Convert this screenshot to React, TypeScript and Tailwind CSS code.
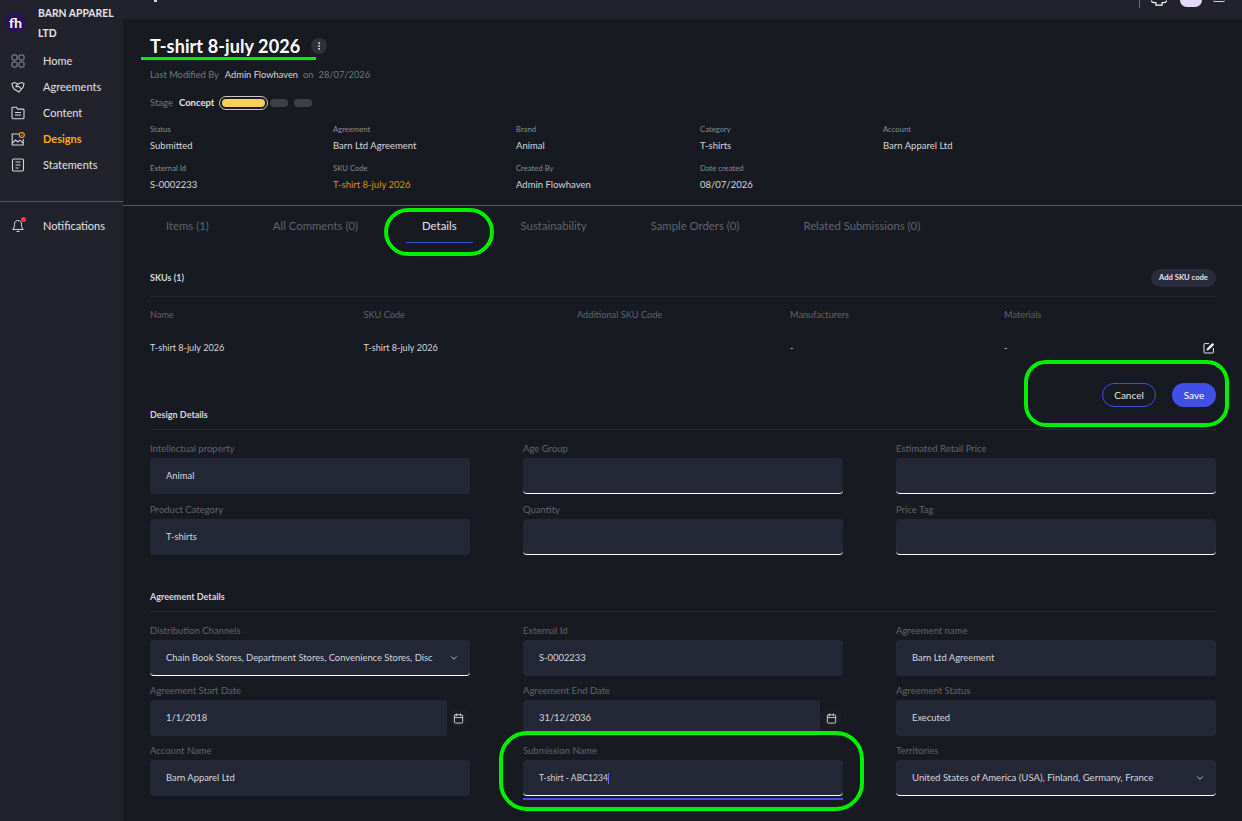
import { Calendar, ChevronDown, EllipsisVertical } from "lucide-react";

const font = { fontFamily: '"Lato", "Noto Sans", sans-serif' };

function HomeIcon() {
  return (
    <svg width="14" height="14" viewBox="0 0 14 14" fill="none" stroke="#9a9ba3" strokeWidth="1">
      <rect x="1" y="1" width="5" height="5" rx="1.2" />
      <rect x="8" y="1" width="5" height="5" rx="1.2" />
      <rect x="1" y="8" width="5" height="5" rx="1.2" />
      <rect x="8" y="8" width="5" height="5" rx="1.2" />
    </svg>
  );
}

function HandshakeIcon() {
  return (
    <svg width="14" height="14" viewBox="0 0 14 14" fill="none" stroke="#d8d8dc" strokeWidth="1.1">
      <path d="M1 3.5l2.5-1L7 4l3.5-1.5L13 3.5l-.8 3.5L8 12 3 9 1.6 6.5z" />
      <path d="M7 4L4.8 6.2c.8.9 1.8.7 2.6 0L10.5 9" />
    </svg>
  );
}

function FolderIcon() {
  return (
    <svg width="14" height="14" viewBox="0 0 14 14" fill="none" stroke="#d8d8dc" strokeWidth="1.1">
      <path d="M1 2.2c0-.5.4-.9.9-.9h3.4l1.4 1.8h5.4c.5 0 .9.4.9.9v7.8c0 .5-.4.9-.9.9H1.9c-.5 0-.9-.4-.9-.9z" />
      <path d="M4 6.5h6M4 9h6" />
    </svg>
  );
}

function DesignsIcon() {
  return (
    <svg width="14" height="14" viewBox="0 0 14 14" fill="none" strokeWidth="1.1">
      <path d="M8 2H1.2v11h11V7" stroke="#d8d8dc" />
      <path d="M1.5 11l3-3 2.4 2 2-1.8 3 2.6" stroke="#d8d8dc" />
      <circle cx="10.8" cy="3" r="2.5" stroke="#ffb020" />
      <path d="M9.8 3l.8.8 1.2-1.4" stroke="#ffb020" strokeWidth="0.8" />
    </svg>
  );
}

function StatementsIcon() {
  return (
    <svg width="14" height="14" viewBox="0 0 14 14" fill="none" stroke="#d8d8dc" strokeWidth="1.1">
      <rect x="1.5" y="1" width="11" height="12" rx="1.2" />
      <path d="M4.5 4h5M4.5 7h5M4.5 10h3" />
    </svg>
  );
}

function BellIcon() {
  return (
    <span className="relative flex h-[14px] w-[14px]">
      <svg width="14" height="14" viewBox="0 0 14 14" fill="none" stroke="#d8d8dc" strokeWidth="1">
        <path d="M7 1.5c-2.4 0-3.6 1.8-3.6 3.8v2.6L1.8 10.5h10.4l-1.6-2.6V5.3c0-2-1.2-3.8-3.6-3.8z" />
        <path d="M5.5 12.5h3" />
      </svg>
      <span className="absolute right-[-1px] top-[-2px] h-[5px] w-[5px] rounded-full bg-[#f0385c]" />
    </span>
  );
}

function EditIcon() {
  return (
    <svg width="12" height="12" viewBox="0 0 12 12" fill="none">
      <path d="M6 1.6H1.6c-.4 0-.6.2-.6.6v8.2c0 .4.2.6.6.6h8.2c.4 0 .6-.2.6-.6V6" stroke="#e4e4e8" strokeWidth="1" />
      <path d="M4 6.4L9 1.4c.3-.3.8-.3 1.1 0l.6.6c.3.3.3.8 0 1.1l-5 5-2.2.5z" fill="#ffffff" />
    </svg>
  );
}

// only the bottom of the settings gear shows above the screenshot's edge
function GearStub() {
  return (
    <svg width="16" height="6" viewBox="0 0 16 6" fill="none" stroke="#ffffff" strokeWidth="1.2">
      <path d="M0.5 0.5c0 1.4 1.2 2.2 2.8 2h1.6v2.6h6.2V2.5h1.6c1.6.2 2.8-.6 2.8-2" />
    </svg>
  );
}

function NavItem({ icon, label, active }: { icon: React.ReactNode; label: string; active?: boolean }) {
  return (
    <div className="flex h-[26px] items-center">
      <span className="flex w-[43px] pl-[11px]">{icon}</span>
      <span className={`text-[11px] ${active ? "font-bold text-[#ffad0d]" : "text-[#e4e4e8]"}`}>{label}</span>
    </div>
  );
}

function Meta({ label, value, accent }: { label: string; value: string; accent?: boolean }) {
  return (
    <div className="flex h-[39px] flex-col">
      <span className="text-[7.7px] leading-[10px] text-[#8a8b93]">{label}</span>
      <span className={`mt-[4px] text-[9.5px] leading-[16px] ${accent ? "text-[#d9950f]" : "text-[#d8d8dc]"}`}>{value}</span>
    </div>
  );
}

function Field({
  label,
  value,
  underline,
  select,
  date,
  valueClass = "text-[9.4px]",
}: {
  label: string;
  value?: string;
  underline?: boolean;
  select?: boolean;
  date?: boolean;
  valueClass?: string;
}) {
  return (
    <div className="flex flex-col">
      <span className="h-[20px] pt-[1px] text-[9.5px] leading-[20px] text-[#62636d]">{label}</span>
      <div className="flex items-center">
        <div
          className={`flex h-[36px] min-w-0 flex-1 items-center justify-between rounded-[4px] bg-[#232736] pl-[16px] pr-[11px] pt-[1px] text-[#d8d8dc] ${valueClass} ${
            underline ? "border-b border-white" : ""
          }`}
        >
          <span className="whitespace-nowrap">{value}</span>
          {select && <ChevronDown size={10} className="shrink-0 text-[#d8d8dc]" />}
        </div>
        {date && (
          <span className="flex w-[23px] shrink-0 justify-center">
            <span className="flex h-[20px] w-[20px] items-center justify-center rounded-full bg-[#1c1e26]">
              <Calendar size={11} className="text-[#d8d8dc]" />
            </span>
          </span>
        )}
      </div>
    </div>
  );
}

const tabs = [
  { label: "Items (1)" },
  { label: "All Comments (0)" },
  { label: "Details", active: true },
  { label: "Sustainability" },
  { label: "Sample Orders (0)" },
  { label: "Related Submissions (0)" },
];

export default function App() {
  return (
    <div style={font} className="relative flex h-[821px] w-[1242px] overflow-hidden bg-[#181a22]">
      {/* Sidebar */}
      <aside className="flex w-[123px] shrink-0 flex-col bg-[#21222c]">
        <div className="flex h-[45px] items-center pl-[5px]">
          <span className="flex h-[21px] w-[21px] shrink-0 items-center justify-center rounded-full bg-[#2c1254] text-[14px] font-bold leading-none text-white">
            fh
          </span>
          <span className="ml-[12px] text-[10.4px] font-bold leading-[20px] text-[#e4e4e8]">BARN APPAREL LTD</span>
        </div>
        <div className="mt-[3px] flex flex-col">
          <NavItem icon={<HomeIcon />} label="Home" />
          <NavItem icon={<HandshakeIcon />} label="Agreements" />
          <NavItem icon={<FolderIcon />} label="Content" />
          <NavItem icon={<DesignsIcon />} label="Designs" active />
          <NavItem icon={<StatementsIcon />} label="Statements" />
        </div>
        <div className="mt-[23px] border-t border-[#55565f]" />
        <div className="mt-[11px]">
          <NavItem icon={<BellIcon />} label="Notifications" />
        </div>
      </aside>

      <main className="flex min-w-0 flex-1 flex-col">
        {/* Top bar, cut off by the screenshot */}
        <div className="flex h-[19px] shrink-0 items-start justify-between bg-[#21222c]">
          <span className="ml-[31px] h-[2px] w-[3px] bg-[#d8d8dc]" />
          <div className="mr-[17px] flex h-[8px] items-start">
            <span className="h-[8px] w-px bg-[#6a6b73]" />
            <span className="ml-[11px] flex">
              <GearStub />
            </span>
            <span className="ml-[13px] h-[7px] w-[22px] rounded-b-full bg-[#e4d8fb]" />
            <span className="ml-[11px] h-[2px] w-[12px] rounded-b-full border-b border-[#d8d8dc]" />
          </div>
        </div>

        {/* Design header */}
        <section className="h-[187px] shrink-0 border-b border-[#55565f] pl-[27px] pr-[26px]">
          <div className="mt-[17px] flex h-[20px] items-center">
            <h1 className="text-[18px] font-bold leading-[20px] tracking-[0.1px] text-white">T-shirt 8-july 2026</h1>
            <span className="ml-[11px] flex h-[16px] w-[16px] items-center justify-center rounded-full bg-[#2f303a]">
              <EllipsisVertical size={10} className="text-white" />
            </span>
          </div>
          <div className="mt-[12px] flex h-[14px] items-center text-[9.3px]">
            <span className="text-[#75767e]">Last Modified By</span>
            <span className="ml-[6px] text-[#d8d8dc]">Admin Flowhaven</span>
            <span className="ml-[5px] text-[#75767e]">on</span>
            <span className="ml-[5px] text-[#75767e]">28/07/2026</span>
          </div>
          <div className="mt-[14px] flex h-[14px] items-center text-[9.5px]">
            <span className="text-[#75767e]">Stage</span>
            <span className="ml-[6px] font-bold text-[#e4e4e8]">Concept</span>
            <span className="ml-[5px] flex h-[14px] w-[49px] items-center justify-center rounded-full border border-[#c9c9cc]">
              <span className="h-[8px] w-[43px] rounded-full bg-[#ffcf5c]" />
            </span>
            <span className="ml-[2px] h-[8px] w-[18px] rounded-full bg-[#3f4047]" />
            <span className="ml-[6px] h-[8px] w-[18px] rounded-full bg-[#3f4047]" />
          </div>
          <div className="mt-[14px] grid grid-cols-[183px_183px_184px_183px_1fr]">
            <Meta label="Status" value="Submitted" />
            <Meta label="Agreement" value="Barn Ltd Agreement" />
            <Meta label="Brand" value="Animal" />
            <Meta label="Category" value="T-shirts" />
            <Meta label="Account" value="Barn Apparel Ltd" />
            <Meta label="External Id" value="S-0002233" />
            <Meta label="SKU Code" value="T-shirt 8-july 2026" accent />
            <Meta label="Created By" value="Admin Flowhaven" />
            <Meta label="Date created" value="08/07/2026" />
          </div>
        </section>

        {/* Tabs */}
        <nav className="flex h-[37px] shrink-0 gap-[64px] pl-[43px] text-[11.35px]">
          {tabs.map((tab) => (
            <span
              key={tab.label}
              className={`flex h-[37px] items-center whitespace-nowrap pt-[3px] ${
                tab.active ? "-mx-[16px] border-b border-[#3f4fe8] px-[16px] text-[#e4e4e8]" : "text-[#62636d]"
              }`}
            >
              {tab.label}
            </span>
          ))}
        </nav>

        <div className="flex-1 pl-[27px] pr-[26px]">
          {/* SKUs */}
          <div className="mt-[25px] flex h-[20px] items-center justify-between">
            <span className="text-[9px] font-bold text-[#d8d8dc]">SKUs (1)</span>
            <span className="flex h-[18px] w-[65px] items-center justify-center rounded-full bg-[#2a2c3e] text-[7.6px] font-bold text-[#e4e4e8]">
              Add SKU code
            </span>
          </div>
          <div className="mt-[8px] border-t border-[#26272f]">
            <div className="grid h-[36px] grid-cols-[213.5px_213.5px_213px_214px_1fr] items-center text-[9.2px] text-[#62636d]">
              <span>Name</span>
              <span>SKU Code</span>
              <span>Additional SKU Code</span>
              <span>Manufacturers</span>
              <span>Materials</span>
            </div>
            <div className="grid h-[30px] grid-cols-[213.5px_213.5px_213px_214px_1fr] items-center text-[9.1px] text-[#d8d8dc]">
              <span>T-shirt 8-july 2026</span>
              <span>T-shirt 8-july 2026</span>
              <span />
              <span>-</span>
              <span className="flex items-center justify-between pr-[1px]">
                -
                <EditIcon />
              </span>
            </div>
          </div>

          {/* Actions */}
          <div className="mt-[20px] flex h-[24px] justify-end gap-[16px] text-[10px]">
            <span className="flex w-[54px] items-center justify-center rounded-full border border-[#3f4fe8] text-[#e4e4e8]">
              Cancel
            </span>
            <span className="flex w-[44px] items-center justify-center rounded-full bg-[#3f4fe8] text-white">Save</span>
          </div>

          {/* Design details */}
          <h2 className="flex h-[15px] items-center text-[9px] font-bold text-[#d8d8dc]">Design Details</h2>
          <div className="mt-[7px] border-t border-[#26272f] pt-[8px]">
            <div className="grid grid-cols-3 gap-x-[53px] gap-y-[5px]">
              <Field label="Intellectual property" value="Animal" />
              <Field label="Age Group" underline />
              <Field label="Estimated Retail Price" underline />
              <Field label="Product Category" value="T-shirts" />
              <Field label="Quantity" underline />
              <Field label="Price Tag" underline />
            </div>
          </div>

          {/* Agreement details */}
          <h2 className="mt-[34px] flex h-[15px] items-center text-[9px] font-bold text-[#d8d8dc]">Agreement Details</h2>
          <div className="mt-[7px] border-t border-[#26272f] pt-[8px]">
            <div className="grid grid-cols-3 gap-x-[53px] gap-y-[4px]">
              <Field
                label="Distribution Channels"
                value="Chain Book Stores, Department Stores, Convenience Stores, Disc"
                underline
                select
              />
              <Field label="External Id" value="S-0002233" />
              <Field label="Agreement name" value="Barn Ltd Agreement" />
              <Field label="Agreement Start Date" value="1/1/2018" date />
              <Field label="Agreement End Date" value="31/12/2036" date />
              <Field label="Agreement Status" value="Executed" />
              <Field label="Account Name" value="Barn Apparel Ltd" />
              <div className="flex flex-col">
                <span className="h-[20px] pt-[1px] text-[9.5px] leading-[20px] text-[#62636d]">Submission Name</span>
                <div className="flex h-[36px] items-center rounded-[4px] border-b border-white bg-[#232736] pl-[16px] pt-[1px] text-[8.6px] text-[#d8d8dc]">
                  T-shirt - ABC1234
                  <span className="h-[11px] w-px bg-[#5a6cff]" />
                </div>
                <span className="mt-[2px] h-[2px] bg-[#3f4fe8]" />
              </div>
              <Field
                label="Territories"
                value="United States of America (USA), Finland, Germany, France"
                underline
                select
                valueClass="text-[9.6px]"
              />
            </div>
          </div>
        </div>
      </main>

      {/* Green annotations drawn over the screenshot */}
      <span className="absolute left-[141px] top-[57px] h-[3px] w-[175px] bg-[#00f000]" />
      <span className="absolute left-[384px] top-[208px] h-[48px] w-[110px] rounded-[24px] border-[4px] border-[#00f000]" />
      <span className="absolute left-[1024px] top-[360px] h-[67px] w-[205px] rounded-[22px] border-[4px] border-[#00f000]" />
      <span className="absolute left-[499px] top-[731px] h-[80px] w-[365px] rounded-[28px] border-[4px] border-[#00f000]" />
    </div>
  );
}
